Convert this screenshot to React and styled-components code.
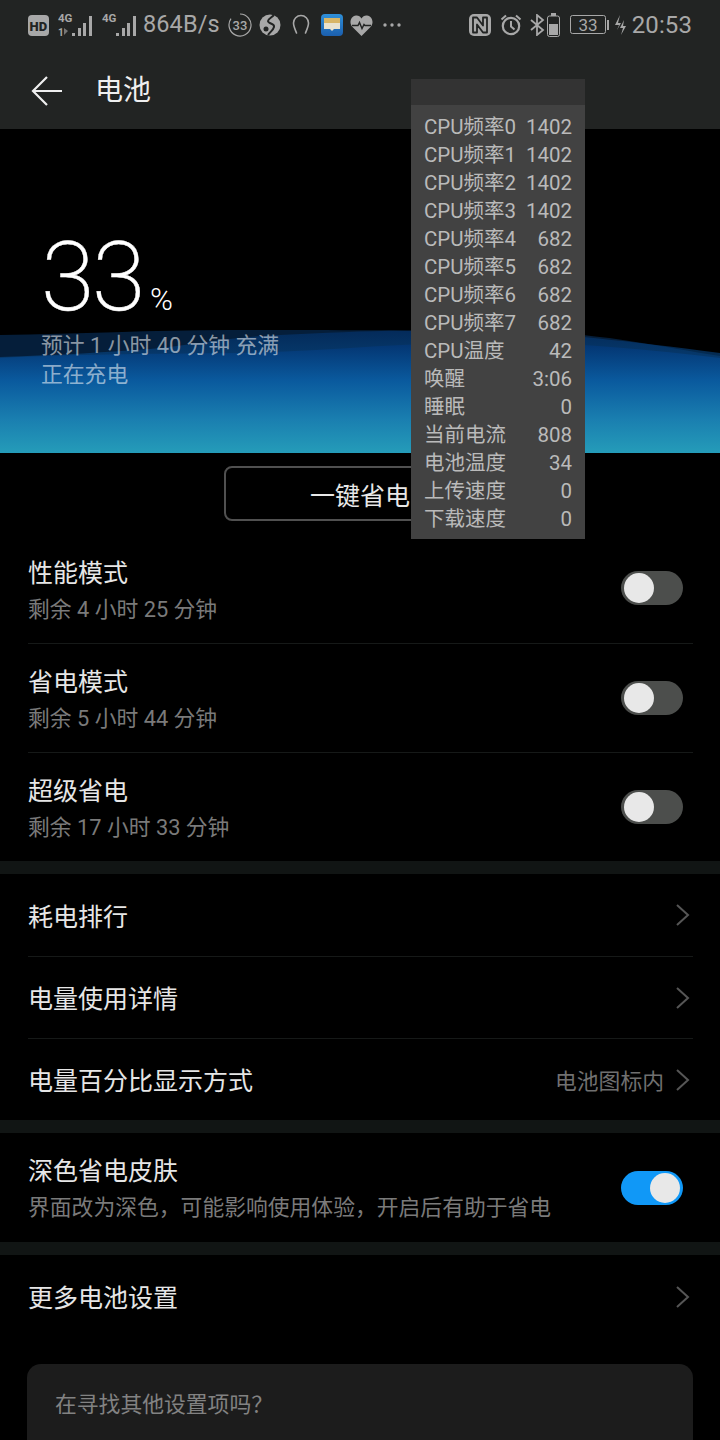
import React from "react";
import styled, { createGlobalStyle } from "styled-components";

const Global = createGlobalStyle`
  html, body { margin: 0; padding: 0; background: #000; }
  body { width: 720px; height: 1440px; overflow: hidden; font-family: Roboto, "Noto Sans CJK SC", sans-serif; }
  * { box-sizing: border-box; }
`;
const Page = styled.div`position: relative; width: 720px; height: 1440px; overflow: hidden; background: #000; color: #e6e6e6;`;
const TopArea = styled.header`height: 129px; background: #222423; display: flex; flex-direction: column;`;
const StatusBar = styled.div`height: 50px; padding: 0 28px; display: flex; align-items: center; justify-content: space-between; color: #a8a8a8;`;
const StatusGroup = styled.div`display: flex; align-items: center;`;
const StatusText = styled.span`font-size: ${p => p.$size || 23}px; margin: 0 ${p => p.$mr || 0}px 0 ${p => p.$ml || 0}px; line-height: 1; letter-spacing: 0.1px;`;
const Icon = styled.svg`display: block; flex: none; margin-left: ${p => p.$ml || 0}px;`;
const TitleBar = styled.div`flex: 1; display: flex; align-items: center; padding: 3px 0 0 31px;`;
const PageTitle = styled.h1`margin: 0 0 0 32px; font-size: 28px; font-weight: 400; color: #efefef; line-height: 1;`;

const Hero = styled.section`position: relative; height: 324px; padding: 95px 0 0 41px; overflow: hidden; background: #000;`;
const WaveArt = styled.svg`position: absolute; left: 0; bottom: 0; display: block;`;
const HeroContent = styled.div`position: relative;`;
const Percent = styled.div`display: flex; align-items: baseline; height: 107px; color: #fff;`;
const PercentValue = styled.span`font-size: 97px; font-weight: 200; line-height: 106px; letter-spacing: -2.5px; width: 109px; -webkit-text-stroke: .4px #fff;`;
const PercentSign = styled.span`font-size: 31px; font-weight: 300; line-height: 1;`;
const HeroLine = styled.div`font-size: 21.8px; line-height: 29px; color: rgba(255,255,255,.55); white-space: pre;`;

const ActionWrap = styled.div`height: 82px; padding-top: 13px; display: flex; justify-content: center;`;
const ActionButton = styled.button`width: 272px; height: 55px; background: transparent; border: 2px solid #505050; border-radius: 8px; color: #e8e8e8; font: 400 25px Roboto, "Noto Sans CJK SC", sans-serif; padding: 0; box-sizing: border-box;`;

const Group = styled.section`border-bottom: ${p => p.$last ? "none" : "13px solid #111514"};`;
const Row = styled.div`
  height: ${p => p.$h}px; margin: 0 27px 0 28px; display: flex; align-items: center; justify-content: space-between;
  border-bottom: ${p => p.$divider ? "1px solid #161918" : "none"};
`;
const RowText = styled.div`display: flex; flex-direction: column; padding-top: 2px;`;
const RowTitle = styled.div`font-size: 25px; line-height: 33px; color: #e6e6e6; white-space: nowrap; padding-top: ${p => p.$shift || 0}px;`;
const RowSub = styled.div`font-size: 21.8px; line-height: 29px; margin-top: 5px; color: #7a7a7a; white-space: pre;`;
const RowRight = styled.div`display: flex; align-items: center; gap: 12px; color: #707070; font-size: 21.8px;`;
const Track = styled.div`
  width: 62px; height: 34px; margin: 0 10px ${p => p.$raise || 0}px 0; border-radius: 17px; padding: 2px 3px; display: flex;
  background: ${p => p.$on ? "#1098f7" : "#4c4e4c"}; justify-content: ${p => p.$on ? "flex-end" : "flex-start"};
`;
const Thumb = styled.div`width: 30px; height: 30px; border-radius: 50%; background: #e8e8e8;`;
const Chevron = styled.svg`display: block; margin-right: 3px;`;

const HelpCard = styled.div`margin: 25px 27px 0; height: 120px; border-radius: 14px; background: #1c1c1c; padding: 27px 28px; font-size: 21.8px; line-height: 28px; color: #828282;`;

const Monitor = styled.aside`position: absolute; left: 411px; top: 79px; width: 174px; background: #424242; color: #bababa; font-size: 20.5px;`;
const MonitorHead = styled.div`height: 26px; background: #333;`;
const MonitorBody = styled.div`padding: 8px 13px 6px 13px;`;
const MonitorRow = styled.div`height: 28px; line-height: 29px; display: flex; align-items: baseline; justify-content: space-between; white-space: nowrap;`;

const GlyphText = styled.text`font-family: Roboto, sans-serif; font-weight: ${p => p.$w || 500}; fill: ${p => p.$fill || "#a8a8a8"};`;

const Signal = ({ roam }) => (
  <Icon width="36" height="26" viewBox="0 0 36 26" $ml={roam ? 9 : 8}>
    <GlyphText x="0" y="10" fontSize="11.5" $w={700}>4G</GlyphText>
    {roam && <GlyphText x="0" y="24" fontSize="10" $w={700}>1</GlyphText>}
    {roam && <path d="M6 16l4 3-4 4z" fill="#777" />}
    {[[14, 21, 3], [20, 16, 8], [25, 11, 13], [31, 4, 20]].map(([x, y, h]) => (
      <rect key={x} x={x} y={y} width="3" height={h} fill="#a8a8a8" />
    ))}
  </Icon>
);

const items = [
  ["CPU频率0", "1402"], ["CPU频率1", "1402"], ["CPU频率2", "1402"], ["CPU频率3", "1402"],
  ["CPU频率4", "682"], ["CPU频率5", "682"], ["CPU频率6", "682"], ["CPU频率7", "682"],
  ["CPU温度", "42"], ["唤醒", "3:06"], ["睡眠", "0"], ["当前电流", "808"],
  ["电池温度", "34"], ["上传速度", "0"], ["下载速度", "0"],
];

const Arrow = () => (
  <Chevron width="14" height="22" viewBox="0 0 14 22" fill="none" stroke="#565656" strokeWidth="2">
    <path d="M1 1l11 10L1 21" />
  </Chevron>
);

const Switch = ({ on, raise }) => <Track $on={on} $raise={raise}><Thumb /></Track>;

export default function App() {
  return (
    <Page>
      <Global />
      <TopArea>
        <StatusBar>
          <StatusGroup>
            <Icon width="21" height="21" viewBox="0 0 21 21">
              <rect width="21" height="21" rx="4" fill="#a8a8a8" />
              <GlyphText x="1.600" y="15.500" fontSize="13" $w={900} $fill="#222423">HD</GlyphText>
            </Icon>
            <Signal roam />
            <Signal />
            <StatusText $ml={5} $size={23.5}>864B/s</StatusText>
            <Icon width="24" height="24" viewBox="0 0 24 24" $ml={8}>
              <path d="M12 1a11 11 0 1 1-9 4.700" fill="none" stroke="#a8a8a8" strokeWidth="1.200" />
              <GlyphText x="12" y="16.500" fontSize="13" textAnchor="middle">33</GlyphText>
            </Icon>
            <Icon width="22" height="22" viewBox="0 0 22 22" $ml={7}>
              <circle cx="11" cy="11" r="10.500" fill="#a8a8a8" />
              <path d="M15 1c-3 3-6 4-6 6 0 3 7 2 6 6-.7 3-4 5-6 8" fill="none" stroke="#222423" strokeWidth="2" />
              <circle cx="7" cy="15" r="2.500" fill="#222423" />
            </Icon>
            <Icon width="18" height="22" viewBox="0 0 18 22" $ml={11}>
              <path d="M4.500 19C2.500 14 1.500 12 1.500 9a7.500 7.500 0 0 1 15 0c0 3-1 5-3 10" fill="none" stroke="#a8a8a8" strokeWidth="1.600" strokeLinecap="round" />
            </Icon>
            <Icon width="22" height="23" viewBox="0 0 22 23" $ml={11}>
              <defs>
                <linearGradient id="wallet" x1="0" y1="0" x2="0" y2="1">
                  <stop offset="0" stopColor="#2f8fd8" />
                  <stop offset="1" stopColor="#1b5fae" />
                </linearGradient>
              </defs>
              <rect width="22" height="22" rx="4" fill="url(#wallet)" />
              <rect x="3" y="4" width="16" height="5" fill="#d8b566" />
              <rect x="3" y="9" width="16" height="6" fill="#e8e2cf" />
              <path d="M9 15h4l-2 2z" fill="#e8e2cf" />
            </Icon>
            <Icon width="23" height="21" viewBox="0 0 23 21" $ml={7}>
              <path d="M11.500 21L2 11.500C-1 8 .5 1 6 .5c2.500-.2 4.300 1 5.500 3C12.700 1.500 14.500.3 17 .5c5.500.5 7 7.500 4 11z" fill="#a8a8a8" />
              <path d="M2 10.500h6l1.500-3 2.500 6 2-4 1 1h6" fill="none" stroke="#222423" strokeWidth="1.400" />
            </Icon>
            <Icon width="18" height="4" viewBox="0 0 18 4" $ml={10}>
              <circle cx="2" cy="2" r="1.700" fill="#a8a8a8" /><circle cx="9" cy="2" r="1.700" fill="#a8a8a8" /><circle cx="16" cy="2" r="1.700" fill="#a8a8a8" />
            </Icon>
          </StatusGroup>
          <StatusGroup>
            <Icon width="22" height="22" viewBox="0 0 22 22">
              <rect width="22" height="22" rx="5" fill="#a8a8a8" />
              <path d="M4 3.500h4l6 8V3.500h4v15h-4l-6-8v8H4z" fill="none" stroke="#222423" strokeWidth="1.800" strokeLinejoin="round" />
            </Icon>
            <Icon width="22" height="22" viewBox="0 0 22 22" $ml={9}>
              <circle cx="11" cy="12" r="8.200" fill="none" stroke="#a8a8a8" strokeWidth="2.200" />
              <path d="M11 7v5.500l3.500 3M1.500 5.500L6 1.500M20.500 5.500L16 1.500" fill="none" stroke="#a8a8a8" strokeWidth="2" />
            </Icon>
            <Icon width="15" height="22" viewBox="0 0 15 22" $ml={8}>
              <path d="M1 6l12 10-6 5V1l6 5L1 16" fill="none" stroke="#a8a8a8" strokeWidth="1.800" />
            </Icon>
            <Icon width="13" height="24" viewBox="0 0 13 24" $ml={2}>
              <rect x=".5" y="3" width="12" height="20.500" rx="2" fill="none" stroke="#a8a8a8" />
              <rect x="4" y="0" width="5" height="3" fill="#a8a8a8" />
              <rect x="2" y="11" width="9" height="11" fill="#a8a8a8" />
            </Icon>
            <Icon width="39" height="20" viewBox="0 0 39 20" $ml={10}>
              <rect x=".5" y=".5" width="35" height="18" rx="2" fill="none" stroke="#a8a8a8" />
              <rect x="37" y="5" width="2" height="10" fill="#a8a8a8" />
              <GlyphText x="18" y="15.500" fontSize="17" textAnchor="middle" $w={400}>33</GlyphText>
            </Icon>
            <Icon width="12" height="22" viewBox="0 0 12 22" $ml={5}>
              <path d="M6 1L1 11h4l-2 5 4-7H4zM10 6l-4 8h3l-2 7 5-9H9z" fill="#a8a8a8" />
            </Icon>
            <StatusText $ml={6} $size={24}>20:53</StatusText>
          </StatusGroup>
        </StatusBar>
        <TitleBar>
          <svg width="32" height="32" viewBox="0 0 32 32" fill="none" stroke="#efefef" strokeWidth="2.200">
            <path d="M31 16H2M16 2L2 16l14 14" />
          </svg>
          <PageTitle>电池</PageTitle>
        </TitleBar>
      </TopArea>

      <Hero>
        <WaveArt width="720" height="126" viewBox="0 0 720 126">
          <defs>
            <linearGradient id="sea" x1="0" y1="0" x2="0" y2="1">
              <stop offset="0" stopColor="#03336f" />
              <stop offset=".35" stopColor="#0a5a9e" />
              <stop offset=".7" stopColor="#1a7fb0" />
              <stop offset="1" stopColor="#259cb9" />
            </linearGradient>
          </defs>
          <path d="M0 8C80 7 150 3 230 3c80 0 190 0 300 2 80 2 130 15 190 24v97H0z" fill="#051e3a" />
          <path d="M0 30C60 28 110 25 150 22 190 18 230 10 280 8c50-2 100-5 140-4 80-2 150 2 300 22v100H0z" fill="url(#sea)" opacity=".6" />
          <path d="M0 31C70 27 140 27 240 26c90-2 170-11 260-11 80 1 150 8 220 16v95H0z" fill="url(#sea)" />
        </WaveArt>
        <HeroContent>
          <Percent>
            <PercentValue>33</PercentValue>
            <PercentSign>%</PercentSign>
          </Percent>
          <HeroLine>预计 1 小时 40 分钟 充满</HeroLine>
          <HeroLine>正在充电</HeroLine>
        </HeroContent>
      </Hero>

      <ActionWrap><ActionButton>一键省电</ActionButton></ActionWrap>

      <Group>
        <Row $h={109} $divider>
          <RowText><RowTitle>性能模式</RowTitle><RowSub>剩余 4 小时 25 分钟</RowSub></RowText>
          <Switch raise={2} />
        </Row>
        <Row $h={109} $divider>
          <RowText><RowTitle>省电模式</RowTitle><RowSub>剩余 5 小时 44 分钟</RowSub></RowText>
          <Switch />
        </Row>
        <Row $h={108}>
          <RowText><RowTitle>超级省电</RowTitle><RowSub>剩余 17 小时 33 分钟</RowSub></RowText>
          <Switch />
        </Row>
      </Group>
      <Group>
        <Row $h={83} $divider><RowTitle $shift={4}>耗电排行</RowTitle><RowRight><Arrow /></RowRight></Row>
        <Row $h={82} $divider><RowTitle $shift={4}>电量使用详情</RowTitle><RowRight><Arrow /></RowRight></Row>
        <Row $h={81}><RowTitle $shift={4}>电量百分比显示方式</RowTitle><RowRight>电池图标内<Arrow /></RowRight></Row>
      </Group>
      <Group>
        <Row $h={109}>
          <RowText><RowTitle>深色省电皮肤</RowTitle><RowSub>界面改为深色，可能影响使用体验，开启后有助于省电</RowSub></RowText>
          <Switch on />
        </Row>
      </Group>
      <Group $last>
        <Row $h={84}><RowTitle $shift={2}>更多电池设置</RowTitle><RowRight><Arrow /></RowRight></Row>
      </Group>
      <HelpCard>在寻找其他设置项吗？</HelpCard>

      <Monitor>
        <MonitorHead />
        <MonitorBody>
          {items.map(([k, v]) => (
            <MonitorRow key={k}><span>{k}</span><span>{v}</span></MonitorRow>
          ))}
        </MonitorBody>
      </Monitor>
    </Page>
  );
}
